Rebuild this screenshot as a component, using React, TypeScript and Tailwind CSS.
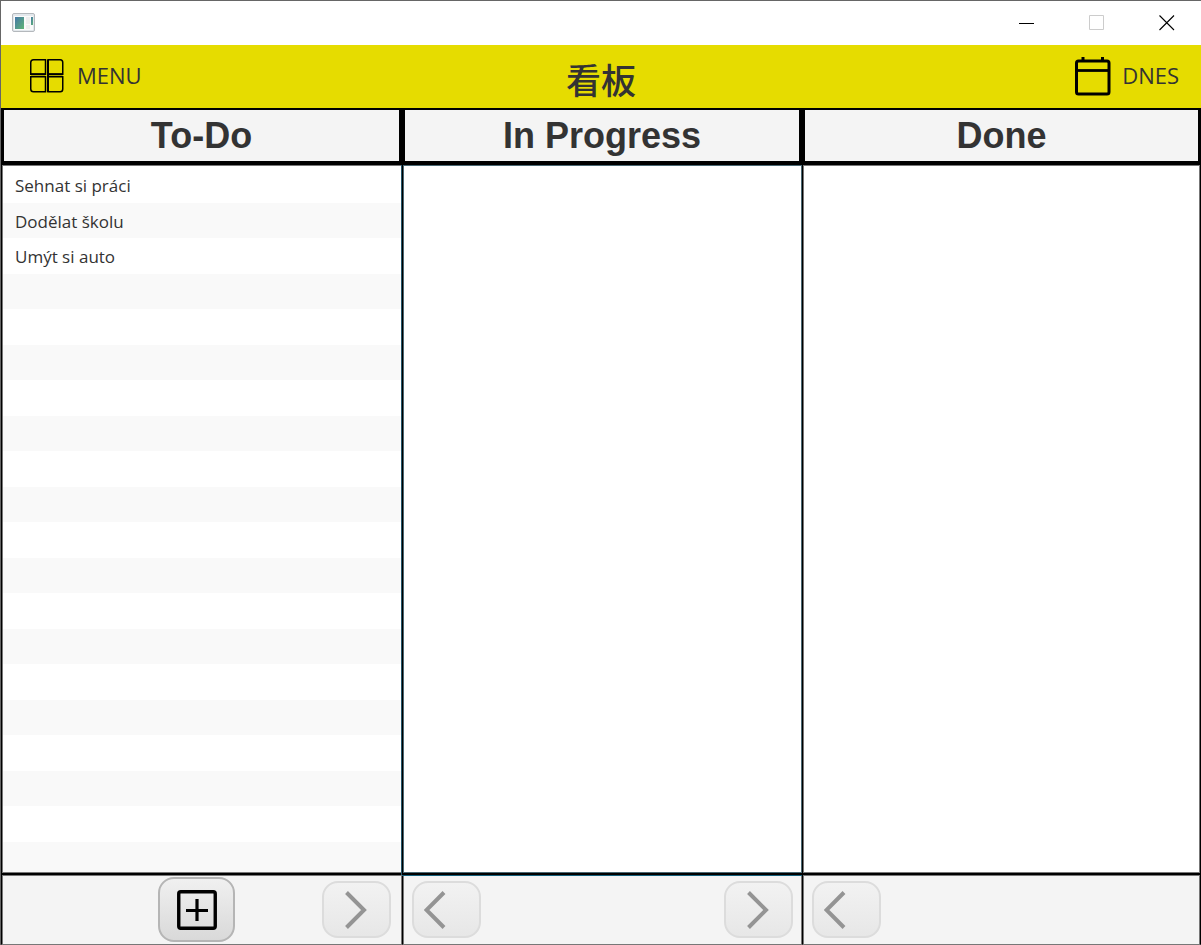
import React from "react";

const tasks = ["Sehnat si práci", "Dodělat školu", "Umýt si auto"];
const rows = Array.from({ length: 60 }, (_, i) => tasks[i] ?? "");

function AppIcon() {
  return (
    <svg width="24" height="20" viewBox="0 0 24 20" aria-hidden="true">
      <defs>
        <linearGradient id="pane" x1="0" y1="0" x2="1" y2="1">
          <stop offset="0" stopColor="#4577a8" />
          <stop offset="1" stopColor="#5fb574" />
        </linearGradient>
      </defs>
      <rect x="0.5" y="0.5" width="22" height="18" rx="1.5" fill="#e3e8ec" stroke="#b4b8bc" />
      <rect x="2" y="3" width="19" height="14" fill="#fafafa" />
      <rect x="3" y="4" width="9" height="12" fill="url(#pane)" />
      <rect x="14" y="4" width="4" height="7" fill="#eeeeee" />
      <rect x="14" y="12" width="4" height="4" fill="#eeeeee" />
      <rect x="19" y="4" width="2" height="8" fill="url(#pane)" />
    </svg>
  );
}

function GridIcon() {
  return (
    <svg width="34" height="34" viewBox="0 0 34 34" fill="none" stroke="#000" strokeWidth="1.5" aria-hidden="true">
      <path d="M3.5 .75H15.500v14.500H.75V3.500Q.75.75 3.500.75Z" />
      <path d="M18 .75h12.250q2.500 0 2.500 2.750v11.750H18Z" />
      <path d="M.75 17.750H15.500v15H3.500Q.75 32.750.75 30Z" />
      <path d="M18 17.750h14.750V30q0 2.750-2.500 2.750H18Z" />
      <path d="M1 15.250h14.500M18 15.250h14.750M18 1v32" strokeWidth="2" />
    </svg>
  );
}

function CalendarIcon() {
  return (
    <svg width="36" height="40" viewBox="0 0 36 40" fill="none" stroke="#000" aria-hidden="true">
      <rect x="1.5" y="5" width="32.5" height="33" rx="2" strokeWidth="3" />
      <path d="M2 14.5h32" strokeWidth="2.8" />
      <path d="M8 1v4M27.5 1v4" strokeWidth="3" />
    </svg>
  );
}

function AddIcon() {
  return (
    <svg width="40" height="40" viewBox="0 0 40 40" fill="none" stroke="#000" aria-hidden="true">
      <rect x="1.75" y="1.75" width="36.5" height="36.5" rx="2" strokeWidth="3.4" />
      <path d="M20 9v22M9 20.5h22" strokeWidth="3.2" />
    </svg>
  );
}

function Chevron({ left }: { left?: boolean }) {
  return (
    <svg width="22" height="38" viewBox="0 0 22 38" fill="none" stroke="#949494" strokeWidth="4" aria-hidden="true">
      <path d={left ? "M20 1.5L2.500 19l17.5 17.5" : "M1.5 1.5L19 19 1.5 36.5"} />
    </svg>
  );
}

function MoveButton({ left }: { left?: boolean }) {
  return (
    <button
      type="button"
      disabled
      aria-label={left ? "Move left" : "Move right"}
      className={
        "flex h-[57px] w-[69px] items-center rounded-2xl border-2 border-[#dcdcdc] bg-linear-to-b from-[#f2f2f2] to-[#e7e7e7] " +
        (left ? "justify-start pl-[10px]" : "justify-end pr-[22px]")
      }
    >
      <Chevron left={left} />
    </button>
  );
}

function ColumnTitle({ children }: { children: string }) {
  return (
    <h2 className="flex h-[57px] shrink-0 items-center justify-center border-x-3 border-t-2 border-b-4 border-black bg-[#f4f4f4] font-['Liberation_Sans',Arial,sans-serif] text-[36px] leading-none font-bold">
      {children}
    </h2>
  );
}

export default function App() {
  return (
    <div className="flex h-screen min-h-[400px] flex-col border-t border-l border-[#666] bg-white font-['Open_Sans','Noto_Sans',sans-serif] text-[#333]">
      <div className="flex h-11 shrink-0 items-center justify-between pr-[26px] pb-px pl-[11px]">
        <AppIcon />
        <div className="flex items-center gap-[54px] text-black">
          <button type="button" aria-label="Minimize">
            <svg width="16" height="16" viewBox="0 0 16 16" stroke="currentColor" aria-hidden="true">
              <path d="M0 8.5h15" />
            </svg>
          </button>
          <button type="button" aria-label="Maximize" disabled>
            <svg width="16" height="16" viewBox="0 0 16 16" fill="none" stroke="#ccc" aria-hidden="true">
              <path d="M.5 .5h14v14H.5Z" />
            </svg>
          </button>
          <button type="button" aria-label="Close">
            <svg width="16" height="16" viewBox="0 0 16 16" stroke="currentColor" strokeWidth="1.1" aria-hidden="true">
              <path d="M.5 .5l14.500 14.500M15 .5L.5 15" />
            </svg>
          </button>
        </div>
      </div>

      <header className="grid h-[63px] shrink-0 grid-cols-3 items-center bg-[#e6dc00] px-[22px] pb-0.5 text-[22px]">
        <button type="button" className="flex items-center gap-[13px] justify-self-start pl-[7px]">
          <GridIcon />
          MENU
        </button>
        <h1 className="justify-self-center pt-1.5 font-['Noto_Sans_CJK_JP',sans-serif] text-[35px] leading-none font-medium">
          看板
        </h1>
        <button type="button" className="flex items-center gap-[11px] justify-self-end">
          <CalendarIcon />
          DNES
        </button>
      </header>

      <main className="grid min-h-0 flex-1 grid-cols-[401fr_400fr_399fr]">
        <section className="flex min-h-0 min-w-0 flex-col">
          <ColumnTitle>To-Do</ColumnTitle>
          <div className="flex min-h-0 flex-1 flex-col border-l border-black">
            <ul className="min-h-0 flex-1 basis-0 overflow-hidden border border-[#777] bg-white pt-px text-[17px]">
              {rows.map((task, i) => (
                <li key={i} className="flex items-center pt-0.5 pl-3 odd:h-9 even:h-[35px] even:bg-[#f9f9f9]">
                  {task}
                </li>
              ))}
            </ul>
          </div>
          <footer className="grid h-[72px] shrink-0 grid-cols-[1fr_auto_1fr] items-center border-t-2 border-b border-l border-black border-b-[#777] bg-[#f4f4f4] pr-[11px] shadow-[inset_1px_1px_0_#777,inset_-1px_0_0_#777]">
            <button
              type="button"
              aria-label="Add task"
              className="col-start-2 flex h-[65px] w-[77px] items-center justify-center rounded-2xl border-2 border-[#b5b5b5] bg-linear-to-b from-[#f0f0f0] to-[#d9d9d9]"
            >
              <AddIcon />
            </button>
            <div className="justify-self-end">
              <MoveButton />
            </div>
          </footer>
        </section>

        <section className="flex min-h-0 min-w-0 flex-col">
          <ColumnTitle>In Progress</ColumnTitle>
          <div className="relative z-10 flex min-h-0 flex-1 flex-col border-b-2 border-l border-black shadow-[-1px_0_0_#24566a,0_1px_0_#14607c]">
            <ul className="flex-1 border border-[#4a6873] bg-white" />
          </div>
          <footer className="flex h-[70px] shrink-0 items-center justify-between border-b border-l border-black border-b-[#777] bg-[#f4f4f4] px-[9px] shadow-[inset_1px_1px_0_#777,inset_-1px_0_0_#777]">
            <MoveButton left />
            <MoveButton />
          </footer>
        </section>

        <section className="flex min-h-0 min-w-0 flex-col">
          <ColumnTitle>Done</ColumnTitle>
          <div className="flex min-h-0 flex-1 flex-col border-x border-black">
            <ul className="flex-1 border border-[#777] bg-white" />
          </div>
          <footer className="flex h-[72px] shrink-0 items-center border-x border-t-2 border-b border-black border-b-[#777] bg-[#f4f4f4] px-[9px] shadow-[inset_1px_1px_0_#777,inset_-1px_0_0_#777]">
            <MoveButton left />
          </footer>
        </section>
      </main>
    </div>
  );
}
